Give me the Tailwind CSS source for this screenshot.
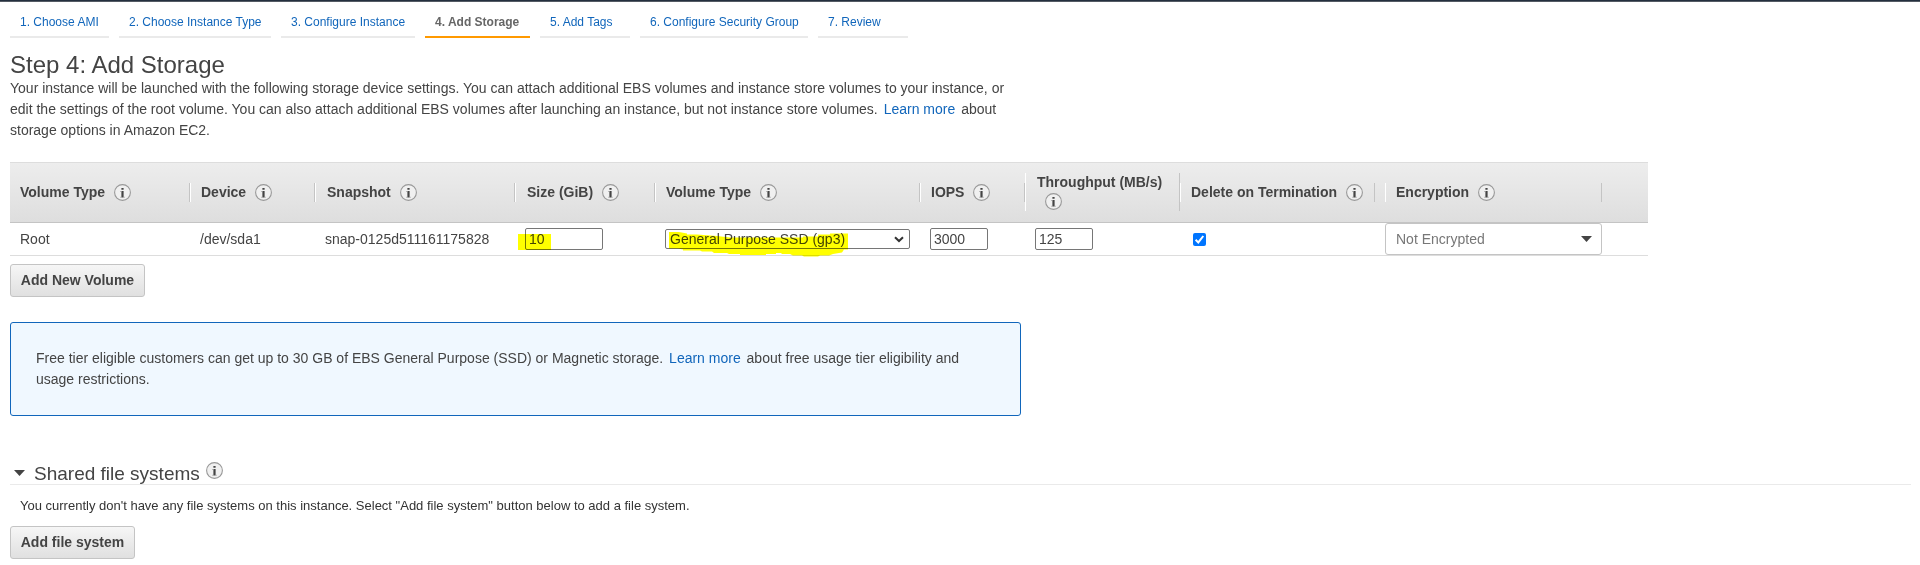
<!DOCTYPE html>
<html lang="en">
<head>
<meta charset="utf-8">
<title>Add Storage</title>
<script src="https://cdn.jsdelivr.net/npm/@tailwindcss/browser@4"></script>
</head>
<body class="h-[565px] overflow-hidden bg-white font-['Liberation_Sans',Arial,sans-serif] text-[14px] leading-[21px] text-[#444]">
<svg class="hidden">
  <symbol id="info" viewBox="0 0 17 17">
    <circle cx="8.5" cy="8.5" r="7.9" fill="#f0f0f0" stroke="#999" stroke-width="1.1"/>
    <path d="M7.4 4h2.2v1.8H7.4zM7.4 7h2.2v6.6H7.4z" fill="#444"/>
    <path d="M6.4 7h1v1h-1zM6.4 12.7h1v1h-1zM9.6 12.7h1v1h-1z" fill="#999"/>
  </symbol>
</svg>
<div class="h-[2px] border-b border-[#545b64] bg-[#232f3e]"></div>

<nav class="flex gap-[10px] pl-[10px] text-[12px] leading-4 text-[#1166bb] *:h-[36px] *:border-b-2 *:border-[#eaeaea] *:pt-[12px] *:pl-[10px] *:whitespace-nowrap">
  <a class="w-[99px]">1. Choose AMI</a>
  <a class="w-[152px]">2. Choose Instance Type</a>
  <a class="w-[134px]">3. Configure Instance</a>
  <a class="w-[105px] border-[#ff9900]! font-bold text-[#666]">4. Add Storage</a>
  <a class="w-[90px]">5. Add Tags</a>
  <a class="w-[168px]">6. Configure Security Group</a>
  <a class="w-[90px]">7. Review</a>
</nav>

<main class="pl-[10px]">
  <h1 class="pt-[13px] text-[24px] leading-[27px]">Step 4: Add Storage</h1>
  <p class="w-[1010px] whitespace-nowrap">Your instance will be launched with the following storage device settings. You can attach additional EBS volumes and instance store volumes to your instance, or<br>edit the settings of the root volume. You can also attach additional EBS volumes after launching an instance, but not instance store volumes. <a class="mx-[2px] text-[#1166bb]">Learn more</a> about<br>storage options in Amazon EC2.</p>

  <section class="mt-[21px] w-[1638px]">
    <div class="grid h-[61px] grid-cols-[180px_125px_200px_140px_265px_105px_155px_195px_227px] items-center border-t border-b border-t-[#ddd] border-b-[#c4c4c4] bg-linear-to-b from-[#ededed] to-[#dedede] font-bold *:flex *:h-[19px] *:items-center *:gap-[9px] *:border-r *:border-l *:border-l-white *:border-r-[#c4c4c4] *:pl-[10px] *:whitespace-nowrap">
      <div class="border-l-0!">Volume Type <svg class="size-[17px]"><use href="#info"/></svg></div>
      <div>Device <svg class="size-[17px]"><use href="#info"/></svg></div>
      <div class="pl-[11px]!">Snapshot <svg class="size-[17px]"><use href="#info"/></svg></div>
      <div class="pl-[11px]!">Size (GiB) <svg class="size-[17px]"><use href="#info"/></svg></div>
      <div>Volume Type <svg class="size-[17px]"><use href="#info"/></svg></div>
      <div>IOPS <svg class="size-[17px]"><use href="#info"/></svg></div>
      <div class="mt-[10px] h-[38px]! flex-col items-start! gap-0! self-start pl-[11px]!"><span class="h-[20px] leading-[19px]">Throughput (MB/s)</span><svg class="ml-2 size-[17px]"><use href="#info"/></svg></div>
      <div>Delete on Termination <svg class="size-[17px]"><use href="#info"/></svg></div>
      <div class="ml-[10px]">Encryption <svg class="size-[17px]"><use href="#info"/></svg></div>
    </div>
    <div class="relative grid h-[33px] grid-cols-[180px_125px_200px_140px_265px_105px_155px_195px_227px] items-center border-b border-[#ddd] leading-[22px] *:ml-[10px]">
      <div>Root</div>
      <div>/dev/sda1</div>
      <div>snap-0125d511161175828</div>
      <div class="h-[22px] w-[78px] rounded-[2px] border border-[#767676] pl-[3px] leading-[20px]">10</div>
      <div class="flex h-[20px] w-[245px] items-center justify-between rounded-[2px] border border-[#767676] pr-[5px] pl-[4px]">General Purpose SSD (gp3)
        <svg class="h-[7px] w-[10px]" viewBox="0 0 10 7"><path d="M1 1.2 5 5 9 1.2" fill="none" stroke="#333" stroke-width="2"/></svg>
      </div>
      <div class="h-[22px] w-[58px] rounded-[2px] border border-[#767676] pl-[3px] leading-[20px]">3000</div>
      <div class="h-[22px] w-[58px] rounded-[2px] border border-[#767676] pl-[3px] leading-[20px]">125</div>
      <svg class="ml-[13px]! size-[13px]" viewBox="0 0 13 13"><rect width="13" height="13" rx="2" fill="#0075ff"/><path d="M2.6 6.8 5.3 9.4 10.3 3" fill="none" stroke="#fff" stroke-width="2"/></svg>
      <div class="flex h-[32px] w-[217px] items-center justify-between rounded-[3px] border border-[#c4c4c4] pr-[9px] pl-[10px] text-[#777]">Not Encrypted
        <svg class="h-[6px] w-[11px]" viewBox="0 0 11 6"><path d="M0 0h11L5.5 6z" fill="#444"/></svg>
      </div>
      <!-- Marker strokes over the size and the volume type -->
      <svg class="absolute top-0 left-[500px] ml-0! h-[36px] w-[360px] mix-blend-multiply" viewBox="510 223 360 36"><path fill="#ff0" d="M518 234h33v16h-33zM669 232h10l8 1.500v1h10l20 1.500 13 1.500h73v-1h15v-2h12v-1h18v16h-4l-2 3-9 1.500-4 1.500h-9l-2 1h-14l-2-1h-9l-3-1.500h-8l-1-1h-5v1h-10v1h-26v-1h-11l-2-1h-13l-2-1.500h-10l-2-1h-17v-1l-5-1h-9z"/></svg>
    </div>
    <button class="mt-[8px] block h-[33px] w-[135px] rounded-[3px] border border-[#c4c4c4] bg-linear-to-b from-[#f6f6f6] to-[#e0e0e0] font-bold whitespace-nowrap">Add New Volume</button>
  </section>

  <section class="mt-[25px] h-[94px] w-[1011px] rounded-[3px] border border-[#1166bb] bg-[#f0f8ff] pt-[25px] pl-[25px] whitespace-nowrap">Free tier eligible customers can get up to 30 GB of EBS General Purpose (SSD) or Magnetic storage. <a class="mx-[2px] text-[#1166bb]">Learn more</a> about free usage tier eligibility and<br>usage restrictions.</section>

  <section class="mt-[46px]">
    <h2 class="flex h-[23px] w-[1901px] items-center border-b border-[#eaeaea] pl-[4px] text-[19px] leading-[22px]">
      <svg class="mr-[9px] h-[6px] w-[11px]" viewBox="0 0 11 6"><path d="M0 0h11L5.500 6z" fill="#444"/></svg><span class="pt-[2px]">Shared file systems</span>
      <svg class="ml-[6px] size-[17px] self-start"><use href="#info"/></svg>
    </h2>
    <p class="mt-[11px] pl-[10px] text-[13px] leading-5 text-[#333]">You currently don't have any file systems on this instance. Select "Add file system" button below to add a file system.</p>
    <button class="mt-[10px] block h-[33px] w-[125px] rounded-[3px] border border-[#c4c4c4] bg-linear-to-b from-[#f6f6f6] to-[#e0e0e0] font-bold whitespace-nowrap">Add file system</button>
  </section>
</main>
</body>
</html>
